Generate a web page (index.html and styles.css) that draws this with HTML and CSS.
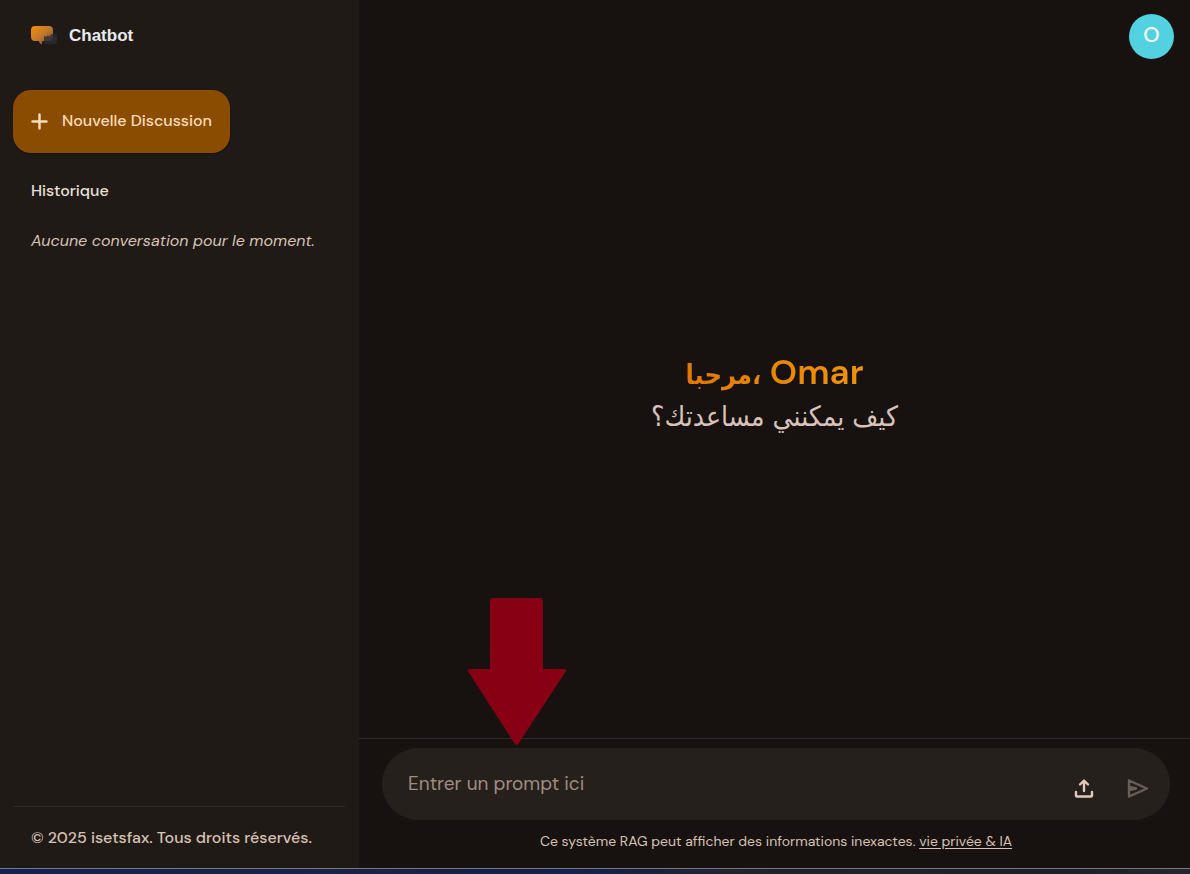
FILE: index.html
```html
<!DOCTYPE html>
<html lang="fr">
<head>
<meta charset="utf-8">
<meta name="viewport" content="width=device-width, initial-scale=1">
<title>Chatbot</title>
<link rel="stylesheet" href="styles.css">
</head>
<body>
<div class="app">
  <aside class="sidebar">
    <div class="brand">
      <svg class="brand-logo" viewBox="0 0 26 20" aria-hidden="true">
        <defs><linearGradient id="logo" x1="0" y1="0" x2="1" y2="1"><stop offset="0" stop-color="#fa8e06"/><stop offset="0.5" stop-color="#bf772c"/><stop offset="1" stop-color="#5c4a3c"/></linearGradient></defs>
        <path d="M4 0H18Q22 0 22 4V11Q22 15 18 15H11.500L10.500 19L7.500 15H4Q0 15 0 11V4Q0 0 4 0Z" fill="url(#logo)"/>
        <path d="M13 10L15 11L16.500 9.500L18 10.500L21 8H24Q26 8 26 10V16Q26 18 24 18H15Q13 18 13 16Z" fill="#2b2d36" fill-opacity="0.8"/>
      </svg>
      <span class="brand-name">Chatbot</span>
    </div>
    <button class="new-chat" type="button">
      <svg class="plus" viewBox="0 0 17 17" aria-hidden="true"><path d="M8.500 1.500V15.500M1.500 8.500H15.500"/></svg>
      <span>Nouvelle Discussion</span>
    </button>
    <h2 class="history-title">Historique</h2>
    <p class="history-empty">Aucune conversation pour le moment.</p>
    <footer class="sidebar-footer">© 2025 isetsfax. Tous droits réservés.</footer>
  </aside>
  <main class="main">
    <header class="topbar"><button class="avatar" type="button" aria-label="Compte Omar">O</button></header>
    <section class="welcome">
      <h1 class="hello"><span class="hello-text"><span class="hello-arabic" lang="ar">مرحبا،</span> Omar</span></h1>
      <p class="question" lang="ar">كيف يمكنني مساعدتك؟</p>
    </section>
    <div class="composer">
      <svg class="pointer" viewBox="0 0 100 148" aria-hidden="true"><path d="M25 1H74L75 3V72H98V73L50 146H49L2 73V72H24V3Z"/></svg>
      <form class="prompt">
        <input class="prompt-input" type="text" aria-label="Prompt" placeholder="Entrer un prompt ici">
        <button class="icon-button" type="button" aria-label="Envoyer un fichier">
          <svg viewBox="0 0 22 20" aria-hidden="true"><path d="M10 13V3M6 6.500L10 2.500L14 6.500M2 14V17.500Q2 18.500 3 18.500H17Q18 18.500 18 17.500V14"/></svg>
        </button>
        <button class="icon-button send" type="submit" aria-label="Envoyer" disabled>
          <svg viewBox="0 0 22 20" aria-hidden="true"><path d="M2 2.500L20 10.500L2 18.500ZM2 9L9 10.500L2 12"/></svg>
        </button>
      </form>
      <p class="notice">Ce système RAG peut afficher des informations inexactes. <a href="#">vie privée &amp; IA</a></p>
    </div>
  </main>
</div>
<div class="desktop-edge"></div>
</body>
</html>
```
FILE: styles.css
```css
* { box-sizing: border-box; }
body {
  margin: 0;
  min-height: 100vh;
  display: flex;
  flex-direction: column;
  background: #17120f;
  color: #d8c2b5;
  font-family: "DM Sans", Inter, "Open Sans", sans-serif;
  font-size: 16px;
  line-height: 24px;
}
button, input { font: inherit; }
h1, h2, p { margin: 0; }
.app { flex: 1; display: flex; }
.sidebar {
  width: 359px;
  flex-shrink: 0;
  padding: 16px 14px 0 13px;
  display: flex;
  flex-direction: column;
  background: #201a17;
}
.brand { display: flex; align-items: center; gap: 12px; height: 40px; padding: 0 18px; }
.brand-logo { width: 26px; height: 20px; }
.brand-name { color: #e8eaf0; font: 700 17px/24px "Liberation Sans", Arial, sans-serif; }
.new-chat {
  align-self: flex-start;
  display: flex;
  align-items: center;
  gap: 14px;
  height: 63px;
  margin-top: 34px;
  padding: 0 18px 1px;
  border: 0;
  border-radius: 18px;
  background: #8a4d00;
  color: #ffdcbe;
  font-weight: 500;
  box-shadow: 0 1px 2px #0006;
}
.plus { width: 17px; height: 17px; fill: none; stroke: currentColor; stroke-width: 2.4; stroke-linecap: round; }
.history-title { margin: 26px 18px 0; color: #ece0da; font-size: 16px; line-height: 24px; font-weight: 500; }
.history-empty { margin: 26px 18px 0; font-style: italic; }
.sidebar-footer { margin-top: auto; padding: 19px 18px 18px; border-top: 1px solid #2f2926; font-weight: 500; }
.main { flex: 1; min-width: 0; display: flex; flex-direction: column; }
.topbar { display: flex; justify-content: flex-end; padding: 14px 16px; }
.avatar { width: 45px; height: 45px; padding: 0 0 3px; border: 0; border-radius: 50%; background: #52d1e0; color: #fff; font-size: 21px; line-height: 24px; font-weight: 500; }
.welcome { flex: 1; display: flex; flex-direction: column; align-items: center; justify-content: center; padding-bottom: 24px; }
.hello { padding-top: 2px; font-size: 35px; line-height: 42px; font-weight: 600; }
.hello-text { background: linear-gradient(90deg, #e07900, #f0940c); background-clip: text; -webkit-background-clip: text; color: transparent; }
.hello-arabic { font-family: "DejaVu Sans Condensed", "DejaVu Sans", sans-serif; font-size: 27px; font-weight: 700; }
.question { font-family: "DejaVu Sans Condensed", "DejaVu Sans", sans-serif; font-size: 28px; line-height: 42px; color: #d8c2b9; }
.composer { position: relative; padding: 9px 20px 14px 23px; border-top: 1px solid #302b28; }
.pointer { position: absolute; left: 108px; bottom: 122px; width: 100px; height: 148px; fill: #870014; stroke: #870014; stroke-width: 2; stroke-linejoin: round; }
.prompt { display: flex; align-items: center; gap: 13px; height: 72px; padding: 0 12px 0 26px; border-radius: 36px; background: #26201c; }
.prompt-input { flex: 1; min-width: 0; padding: 0; border: 0; outline: 0; background: transparent; color: #ece0da; font-size: 19px; line-height: 24px; }
.prompt-input::placeholder { color: #9f8d80; opacity: 1; }
.icon-button { display: grid; place-items: center; width: 40px; height: 40px; margin-top: 8px; padding: 0; border: 0; background: transparent; color: #e0c9bc; }
.icon-button svg { width: 22px; height: 20px; fill: none; stroke: currentColor; stroke-width: 2.4; stroke-linejoin: round; stroke-linecap: round; }
.icon-button.send { color: #6a5f58; }
.notice { margin-top: 9px; padding-bottom: 1px; text-align: center; font-size: 14px; line-height: 24px; }
.notice a { color: inherit; text-underline-offset: 2px; }
.desktop-edge { height: 6px; border-top: 1px solid #77777a; background: linear-gradient(90deg, #122052, #172348 28%, #1b2145 30%, #14204f 48%, #20232f 62%, #1b202c 90%, #25262d); }
```
